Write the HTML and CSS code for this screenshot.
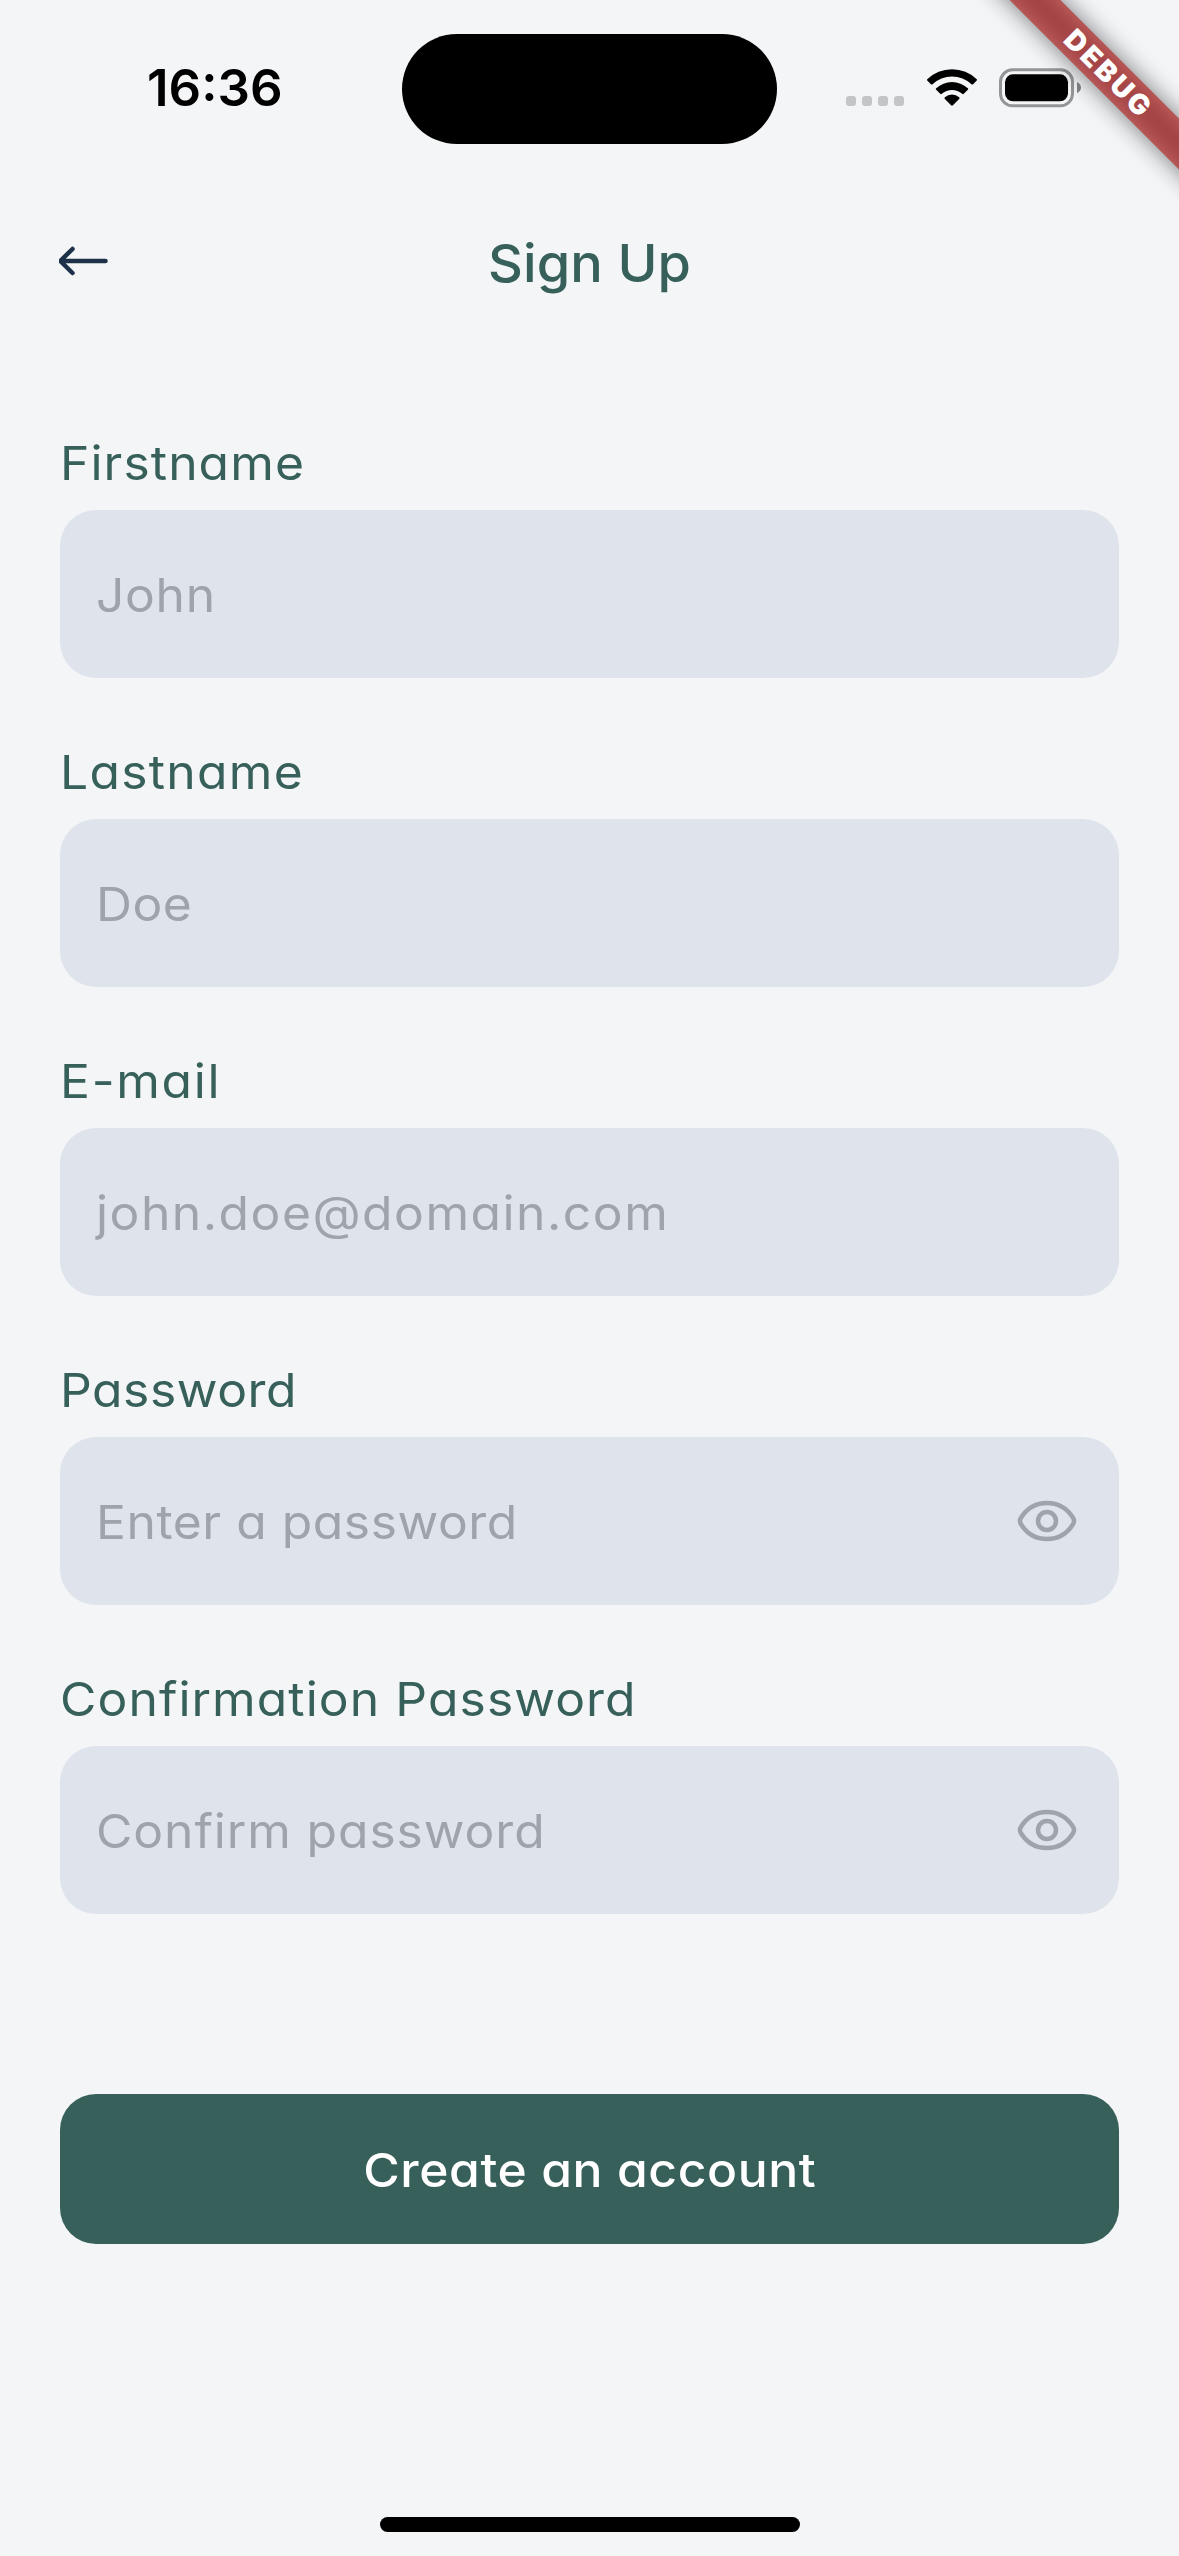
FILE: index.html
```html
<!DOCTYPE html>
<html lang="en">
<head>
<meta charset="utf-8">
<title>Sign Up</title>
<link rel="stylesheet" href="styles.css">
</head>
<body>
<div class="screen">
  <header class="status-bar">
    <div class="status-time"><span class="time">16:36</span></div>
    <div class="island"></div>
    <div class="status-icons">
      <svg class="signal" width="60" height="12" viewBox="0 0 60 12"><g fill="#c4c5c7"><rect x="0" y="1" width="10" height="10" rx="3"/><rect x="16" y="1" width="10" height="10" rx="3"/><rect x="32" y="1" width="10" height="10" rx="3"/><rect x="48" y="1" width="10" height="10" rx="3"/></g></svg>
      <svg class="wifi" width="52" height="38" viewBox="0 0 52 38"><path d="M1.3 10.2a35.5 35.5 0 0 1 49.4 0q.7.7 0 1.400l-3.600 3.600q-.8.7-1.600 0a28.500 28.500 0 0 0-39 0q-.8.7-1.600 0l-3.600-3.600q-.7-.7 0-1.400zM10.200 19.300a23 23 0 0 1 31.600 0q.8.7 0 1.500l-4 4q-.8.700-1.600 0a15.300 15.300 0 0 0-20.400 0q-.8.700-1.600 0l-4-4q-.8-.8 0-1.500zM18.900 28.200a11 11 0 0 1 14.200 0q.9.8 0 1.700l-6.200 6.400q-.9.900-1.800 0l-6.200-6.400q-.9-.9 0-1.700z"/></svg>
      <svg class="battery" width="84" height="40" viewBox="0 0 84 40"><rect x="1.500" y="1.800" width="72" height="36" rx="12" fill="none" stroke="#949597" stroke-width="3"/><rect x="6" y="6.300" width="63" height="27" rx="8"/><path d="M78 14q4 2 4 5.600t-4 5.600z" fill="#858688"/></svg>
    </div>
  </header>
  <nav class="app-bar">
    <svg class="back" width="52" height="32" viewBox="0 0 52 32" fill="none" stroke="#1d3149" stroke-width="4.500" stroke-linecap="round" stroke-linejoin="round"><path d="M13.500 4 2.800 14.500q-1.500 1.500 0 3L13.500 28M3 16h43.500"/></svg>
    <h1 class="title">Sign Up</h1>
  </nav>
  <main class="form">
    <div class="field"><span class="label l-first">Firstname</span><div class="box"><span class="hint h-john">John</span></div></div>
    <div class="field"><span class="label l-last">Lastname</span><div class="box"><span class="hint h-doe">Doe</span></div></div>
    <div class="field"><span class="label l-mail">E-mail</span><div class="box"><span class="hint h-mail">john.doe@domain.com</span></div></div>
    <div class="field"><span class="label l-pass">Password</span><div class="box"><span class="hint h-pass">Enter a password</span><svg class="eye" width="60" height="44" viewBox="0 0 60 44" fill="none" stroke="#9fa3ab" stroke-width="4.500"><path d="M4 18.800C9.500 10 18.500 4 30 4s20.500 6 26 14.800q2 3.200 0 6.400C50.500 34 41.500 40 30 40S9.500 34 4 25.200q-2-3.200 0-6.400z"/><circle cx="30" cy="22" r="9"/></svg></div></div>
    <div class="field"><span class="label l-conf">Confirmation Password</span><div class="box"><span class="hint h-conf">Confirm password</span><svg class="eye" width="60" height="44" viewBox="0 0 60 44" fill="none" stroke="#9fa3ab" stroke-width="4.500"><path d="M4 18.800C9.500 10 18.500 4 30 4s20.500 6 26 14.800q2 3.200 0 6.400C50.500 34 41.500 40 30 40S9.500 34 4 25.200q-2-3.200 0-6.400z"/><circle cx="30" cy="22" r="9"/></svg></div></div>
    <div class="submit"><span class="submit-text">Create an account</span></div>
  </main>
  <div class="home-indicator"></div>
  <div class="debug"><span class="debug-text">DEBUG</span></div>
</div>
</body>
</html>
```
FILE: styles.css
```css
* { box-sizing: border-box; }
body { margin: 0; background: #f3f5f7; font-family: Inter, sans-serif; font-feature-settings: "cv11"; }
.screen { position: relative; width: 1179px; height: 2556px; overflow: hidden; display: flex; flex-direction: column; background: #f3f5f7; }
.status-bar { height: 177px; display: grid; grid-template-columns: 402px 375px 402px; align-items: start; }
.status-time { padding: 57px 0 0 147px; }
.time { font-size: 51px; line-height: 62px; font-weight: 600; color: #000; white-space: nowrap; }
.island { height: 110.6px; margin-top: 33.6px; border-radius: 56px; background: #000; }
.status-icons { display: flex; padding: 68px 0 0 69px; }
.signal { margin-top: 27px; }
.wifi { margin-left: 20px; margin-top: 1px; }
.battery { margin-left: 21px; }
.app-bar { height: 168px; padding: 0 59px; display: grid; grid-template-columns: 120px 1fr 120px; align-items: center; }
.title { margin: 0; padding-top: 4px; text-align: center; font-size: 52.5px; line-height: 72px; font-weight: 500; letter-spacing: .1px; transform: scaleX(1.03); color: #37605a; }
.form { padding: 81px 60px 0; display: flex; flex-direction: column; }
.field { height: 309px; display: flex; flex-direction: column; align-items: stretch; }
.label, .hint { font-size: 47px; font-weight: 380; white-space: nowrap; transform: scaleX(1.06); transform-origin: left center; }
.label { height: 84px; line-height: 74px; color: #37605a; align-self: flex-start; }
.box { height: 168px; border-radius: 36px; background: #dfe4ec; display: flex; align-items: center; justify-content: space-between; padding: 0 42px 0 36px; }
.hint { color: #9fa3ab; }
.l-first { letter-spacing: 1px; }
.l-last { letter-spacing: 1.2px; }
.l-mail { letter-spacing: 1.6px; }
.l-pass { letter-spacing: .5px; }
.l-conf { letter-spacing: 1px; }
.h-john { letter-spacing: .6px; }
.h-doe { letter-spacing: .4px; }
.h-mail { letter-spacing: 1.4px; }
.h-pass { letter-spacing: .5px; }
.h-conf { letter-spacing: .85px; }
.submit { height: 150px; margin-top: 123px; border-radius: 36px; background: #37605a; display: flex; align-items: center; justify-content: center; }
.submit-text { color: #fff; font-size: 47px; font-weight: 500; letter-spacing: .55px; transform: scaleX(1.06); }
.home-indicator { width: 420px; height: 15px; border-radius: 8px; background: #000; margin: auto auto 24px; }
.debug { position: absolute; left: 947px; top: 54px; width: 320px; height: 36px; transform: rotate(45deg); display: flex; align-items: center; justify-content: center; }
.debug::before, .debug::after { content: ""; position: absolute; inset: 0; }
.debug::before { background: rgba(0, 0, 0, .5); filter: blur(12px); }
.debug::after { background: rgba(183, 28, 28, .627); }
.debug-text { position: relative; z-index: 1; color: #fff; font-size: 28px; line-height: 36px; font-weight: 900; letter-spacing: 2.9px; padding-left: 5px; }
```
